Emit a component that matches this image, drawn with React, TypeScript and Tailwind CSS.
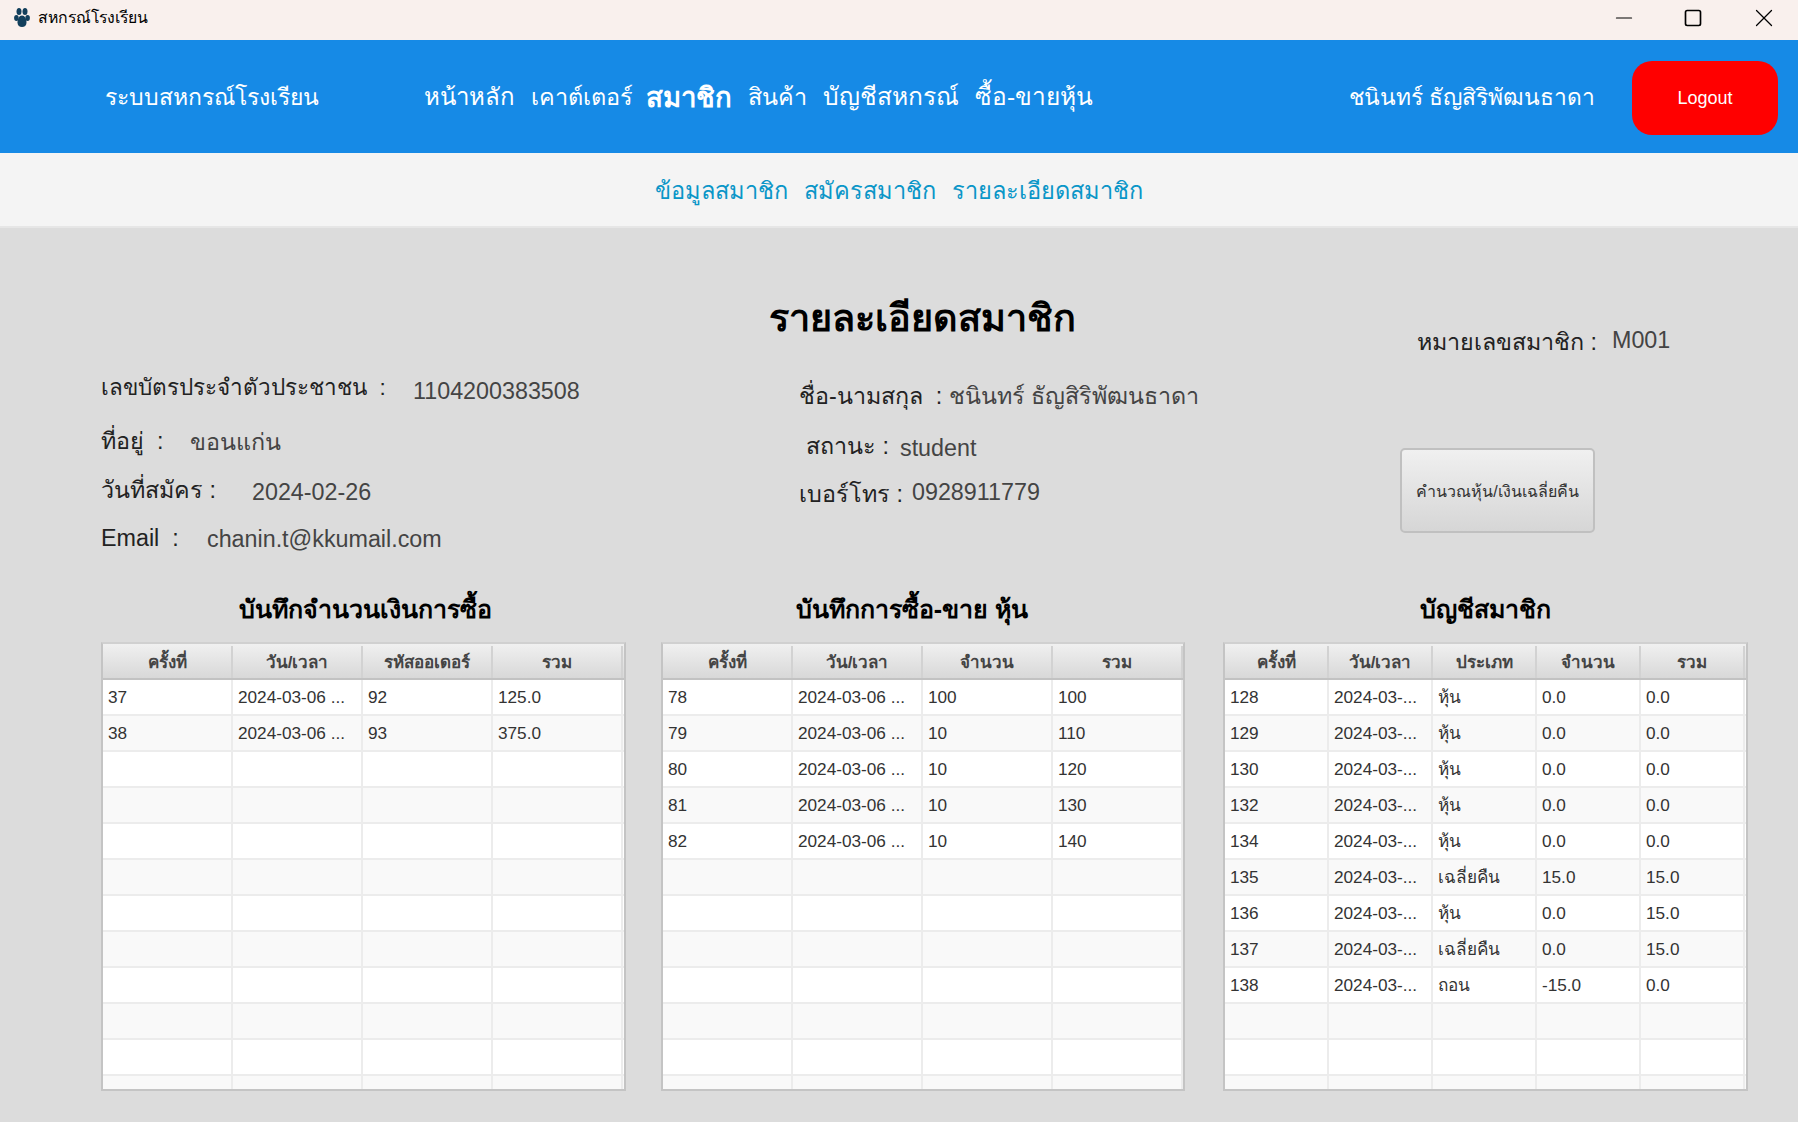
import { Minus, Square, X } from "lucide-react";

const FONT = "font-['Liberation_Sans','Noto_Sans','DejaVu_Sans',sans-serif]";

const NAV = [
  { label: "หน้าหลัก", cls: "text-[24px]" },
  { label: "เคาต์เตอร์", cls: "text-[23.5px]" },
  { label: "สมาชิก", cls: "-ml-[3px] text-[27.6px] font-bold" },
  { label: "สินค้า", cls: "text-[23.4px]" },
  { label: "บัญชีสหกรณ์", cls: "text-[24.6px]" },
  { label: "ซื้อ-ขายหุ้น", cls: "text-[24.5px]" },
];
const SUB_NAV = ["ข้อมูลสมาชิก", "สมัครสมาชิก", "รายละเอียดสมาชิก"];

const PURCHASES = [
  ["37", "2024-03-06 ...", "92", "125.0"],
  ["38", "2024-03-06 ...", "93", "375.0"],
];
const SHARES = [
  ["78", "2024-03-06 ...", "100", "100"],
  ["79", "2024-03-06 ...", "10", "110"],
  ["80", "2024-03-06 ...", "10", "120"],
  ["81", "2024-03-06 ...", "10", "130"],
  ["82", "2024-03-06 ...", "10", "140"],
];
const ACCOUNT = [
  ["128", "2024-03-...", "หุ้น", "0.0", "0.0"],
  ["129", "2024-03-...", "หุ้น", "0.0", "0.0"],
  ["130", "2024-03-...", "หุ้น", "0.0", "0.0"],
  ["132", "2024-03-...", "หุ้น", "0.0", "0.0"],
  ["134", "2024-03-...", "หุ้น", "0.0", "0.0"],
  ["135", "2024-03-...", "เฉลี่ยคืน", "15.0", "15.0"],
  ["136", "2024-03-...", "หุ้น", "0.0", "15.0"],
  ["137", "2024-03-...", "เฉลี่ยคืน", "0.0", "15.0"],
  ["138", "2024-03-...", "ถอน", "-15.0", "0.0"],
];

function DataTable({ columns, rows, colClass }: { columns: string[]; rows: string[][]; colClass: string }) {
  const blank = Array.from({ length: 12 }, (_, i) => rows[i] ?? columns.map(() => ""));
  return (
    <div className="h-[449px] overflow-hidden border-2 border-[#c4c4c4] border-t-[#d0d0d0] bg-white">
      <div className="flex h-[36px] border-b-2 border-[#c2c2c2] bg-gradient-to-b from-[#f0f0f0] to-[#d8d8d8] pt-[2px]">
        {columns.map((c) => (
          <div
            key={c}
            className={`${colClass} flex items-center justify-center border-r-2 border-[#d2d2d2] pt-[2px] text-[17px] font-bold text-[#444444]`}
          >
            {c}
          </div>
        ))}
      </div>
      {blank.map((row, i) => (
        <div key={i} className={`flex h-[36px] border-b-2 border-[#ececec] ${i % 2 === 1 ? "bg-[#f9f9f9]" : "bg-white"}`}>
          {row.map((cell, j) => (
            <div key={j} className={`${colClass} flex items-center border-r-2 border-[#ececec] pt-[2px] pl-[5px] text-[17.2px] text-[#333333]`}>
              {cell}
            </div>
          ))}
        </div>
      ))}
    </div>
  );
}

function Section({
  title,
  titleClass = "",
  widthClass,
  children,
}: {
  title: string;
  titleClass?: string;
  widthClass: string;
  children: React.ReactNode;
}) {
  return (
    <div className={`${widthClass} shrink-0`}>
      <h2 className={`mb-[13px] h-[39px] text-center text-[25px] leading-[39px] font-bold text-black ${titleClass}`}>{title}</h2>
      {children}
    </div>
  );
}

function Field({
  label,
  value,
  labelClass,
  valueClass,
  className = "",
}: {
  label: string;
  value: string;
  labelClass: string;
  valueClass: string;
  className?: string;
}) {
  return (
    <div className={`flex ${className}`}>
      <span className={`${labelClass} shrink-0 whitespace-pre text-[#222222]`}>{label}</span>
      <span className={`${valueClass} relative text-[#444444]`}>{value}</span>
    </div>
  );
}

export default function App() {
  return (
    <div className={`${FONT} flex h-[1122px] w-[1798px] flex-col overflow-hidden bg-[#dcdcdc]`}>
      {/* title bar */}
      <div className="flex h-[40px] items-center bg-[#f9f0ed] pb-[5px] pl-[14px]">
        <svg viewBox="0 0 16 19" className="h-[19px] w-[16px]" fill="#123f5c">
          <ellipse cx="5" cy="3.5" rx="2.5" ry="3.5" />
          <ellipse cx="11" cy="3.5" rx="2.5" ry="3.5" />
          <ellipse cx="2.4" cy="10" rx="2.3" ry="3" />
          <ellipse cx="13.6" cy="10" rx="2.3" ry="3" />
          <path d="M8 7.5c2.8 0 4.5 3.5 4.5 7 0 3-2 4.5-4.5 4.5s-4.5-1.5-4.5-4.5c0-3.5 1.7-7 4.5-7z" />
        </svg>
        <span className="ml-[8px] text-[15.8px] text-black">สหกรณ์โรงเรียน</span>
        <div className="mr-[19px] ml-auto flex items-center gap-[46px]">
          <Minus className="h-[26px] w-[26px] text-black" strokeWidth={1} />
          <Square className="h-[20px] w-[20px] text-black" strokeWidth={2} />
          <X className="h-[30px] w-[30px] text-black" strokeWidth={1} />
        </div>
      </div>

      {/* main nav */}
      <div className="flex h-[113px] items-center bg-[#168ae6] pt-[2px] text-white">
        <div className="ml-[105px] w-[319px] text-[23px]">ระบบสหกรณ์โรงเรียน</div>
        <div className="flex items-center gap-[16px]">
          {NAV.map((n) => (
            <span key={n.label} className={n.cls}>
              {n.label}
            </span>
          ))}
        </div>
        <div className="mr-[37px] ml-auto text-[22.8px]">ชนินทร์ ธัญสิริพัฒนธาดา</div>
        <button className="mr-[20px] h-[74px] w-[146px] rounded-[20px] bg-[#ff0000] pt-[2px] text-[18px] text-white">Logout</button>
      </div>

      {/* sub nav */}
      <div className="flex h-[75px] items-center justify-center gap-[16px] border-b-2 border-[#e6e6e6] bg-[#f4f4f4] pt-[4px] text-[23.6px] text-[#0a96c8]">
        {SUB_NAV.map((n) => (
          <span key={n}>{n}</span>
        ))}
      </div>

      {/* member detail */}
      <div className="relative flex flex-1 flex-col pt-[65px] pl-[101px]">
        <h1 className="ml-[661px] h-[50px] w-[320px] text-center text-[37.8px] leading-[50px] font-bold whitespace-nowrap text-black">
          รายละเอียดสมาชิก
        </h1>
        <div className="flex text-[23.3px] leading-[36px]">
          <div className="flex w-[698px] flex-col">
            <Field
              className="mt-[27px]"
              labelClass="w-[312px] text-[22.5px]"
              valueClass="top-[3px]"
              label="เลขบัตรประจำตัวประชาชน  :"
              value="1104200383508"
            />
            <Field className="mt-[17px]" labelClass="w-[89px]" valueClass="top-[1px]" label="ที่อยู่  :" value="ขอนแก่น" />
            <Field className="mt-[13px]" labelClass="w-[151px]" valueClass="top-[2px]" label="วันที่สมัคร :" value="2024-02-26" />
            <Field className="mt-[12px]" labelClass="w-[106px]" valueClass="top-[1px]" label="Email  :" value="chanin.t@kkumail.com" />
          </div>
          <div className="flex w-[618px] flex-col">
            <Field className="mt-[35px]" labelClass="w-[150px]" valueClass="top-0" label="ชื่อ-นามสกุล  :" value="ชนินทร์ ธัญสิริพัฒนธาดา" />
            <Field className="mt-[14px] ml-[7px]" labelClass="w-[94px]" valueClass="top-[2px]" label="สถานะ :" value="student" />
            <Field className="mt-[12px]" labelClass="w-[113px]" valueClass="-top-[2px]" label="เบอร์โทร :" value="0928911779" />
          </div>
        </div>
        <div className="absolute top-[96px] left-[1417px] flex text-[23.3px] leading-[36px]">
          <span className="w-[195px] text-[#222222]">หมายเลขสมาชิก :</span>
          <span className="relative -top-[2px] text-[#444444]">M001</span>
        </div>
        <button className="absolute top-[220px] left-[1400px] h-[85px] w-[195px] rounded-[5px] border-2 border-[#c0c0c0] bg-gradient-to-b from-[#f0f0f0] to-[#d6d6d6] pt-[3px] text-[16px] text-[#333333]">
          คำนวณหุ้น/เงินเฉลี่ยคืน
        </button>

        <div className="mt-[34px] flex">
          <Section title="บันทึกจำนวนเงินการซื้อ" titleClass="pl-[3px]" widthClass="w-[525px]">
            <DataTable columns={["ครั้งที่", "วัน/เวลา", "รหัสออเดอร์", "รวม"]} rows={PURCHASES} colClass="w-[130px] shrink-0" />
          </Section>
          <div className="ml-[35px]">
            <Section title="บันทึกการซื้อ-ขาย หุ้น" titleClass="pr-[22px]" widthClass="w-[524px]">
              <DataTable columns={["ครั้งที่", "วัน/เวลา", "จำนวน", "รวม"]} rows={SHARES} colClass="w-[130px] shrink-0" />
            </Section>
          </div>
          <div className="ml-[38px]">
            <Section title="บัญชีสมาชิก" widthClass="w-[525px]">
              <DataTable columns={["ครั้งที่", "วัน/เวลา", "ประเภท", "จำนวน", "รวม"]} rows={ACCOUNT} colClass="w-[104px] shrink-0" />
            </Section>
          </div>
        </div>
      </div>
    </div>
  );
}
